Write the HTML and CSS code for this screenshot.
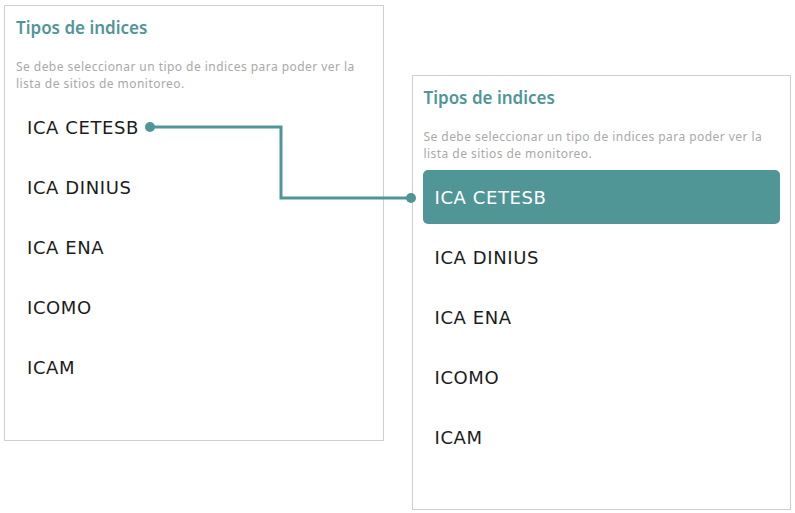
FILE: index.html
```html
<!DOCTYPE html>
<html lang="es">
<head>
    <meta charset="UTF-8">
    <meta name="viewport" content="width=device-width, initial-scale=1.0">
    <title>Tipos de indices</title>
    <link rel="stylesheet" href="styles.css">
</head>
<body>
    <div class="canvas">
        <div class="panel">
            <h2 class="panel-title">Tipos de indices</h2>
            <p class="panel-desc">Se debe seleccionar un tipo de indices para poder ver la lista de sitios de monitoreo.</p>
            <ul class="index-list">
                <li>ICA CETESB</li>
                <li>ICA DINIUS</li>
                <li>ICA ENA</li>
                <li>ICOMO</li>
                <li>ICAM</li>
            </ul>
        </div>

        <div class="panel panel-after">
            <h2 class="panel-title">Tipos de indices</h2>
            <p class="panel-desc">Se debe seleccionar un tipo de indices para poder ver la lista de sitios de monitoreo.</p>
            <ul class="index-list">
                <li class="active">ICA CETESB</li>
                <li>ICA DINIUS</li>
                <li>ICA ENA</li>
                <li>ICOMO</li>
                <li>ICAM</li>
            </ul>
        </div>

        <!-- connector between the two states -->
        <svg class="connector" width="795" height="513" viewBox="0 0 795 513">
            <polyline points="150,127 281,127 281,198 411,198" fill="none" stroke="#519697" stroke-width="3"/>
            <circle cx="150" cy="127" r="5" fill="#519697"/>
            <circle cx="411" cy="198" r="5" fill="#519697"/>
        </svg>
    </div>
</body>
</html>
```

FILE: styles.css
```css
body {
    margin: 0;
    background-color: #fff;
    font-family: "Noto Sans", "Lato", sans-serif;
}

.canvas {
    position: relative;
    display: flex;
    align-items: flex-start;
    gap: 28px;
    padding: 5px 4px 0;
    width: 795px;
    height: 513px;
    box-sizing: border-box;
}

.panel {
    width: 380px;
    height: 436px;
    box-sizing: border-box;
    border: 1px solid #cfcfcf;
    padding: 0 10px;
}

.panel-after {
    margin-top: 70px;
    height: 435px;
}

.panel-title {
    margin: 13px 0 0 1px;
    font-size: 17px;
    font-weight: 600;
    line-height: 18px;
    color: #519697;
}

.panel-desc {
    margin: 21px 0 0 1px;
    font-size: 12px;
    letter-spacing: 0.45px;
    line-height: 17px;
    color: #a9a9a9;
}

.index-list {
    list-style: none;
    margin: 8px 0 0;
    padding: 0;
    display: flex;
    flex-direction: column;
    gap: 6px;
}

.index-list li {
    height: 54px;
    display: flex;
    align-items: center;
    padding: 0 12px;
    border-radius: 5px;
    font-family: "DejaVu Sans", "Noto Sans", sans-serif;
    font-size: 18px;
    letter-spacing: 0.6px;
    color: #1c1c1c;
}

.index-list li.active {
    background-color: #519697;
    color: #fff;
}

.connector {
    position: absolute;
    left: 0;
    top: 0;
    pointer-events: none;
}
```
